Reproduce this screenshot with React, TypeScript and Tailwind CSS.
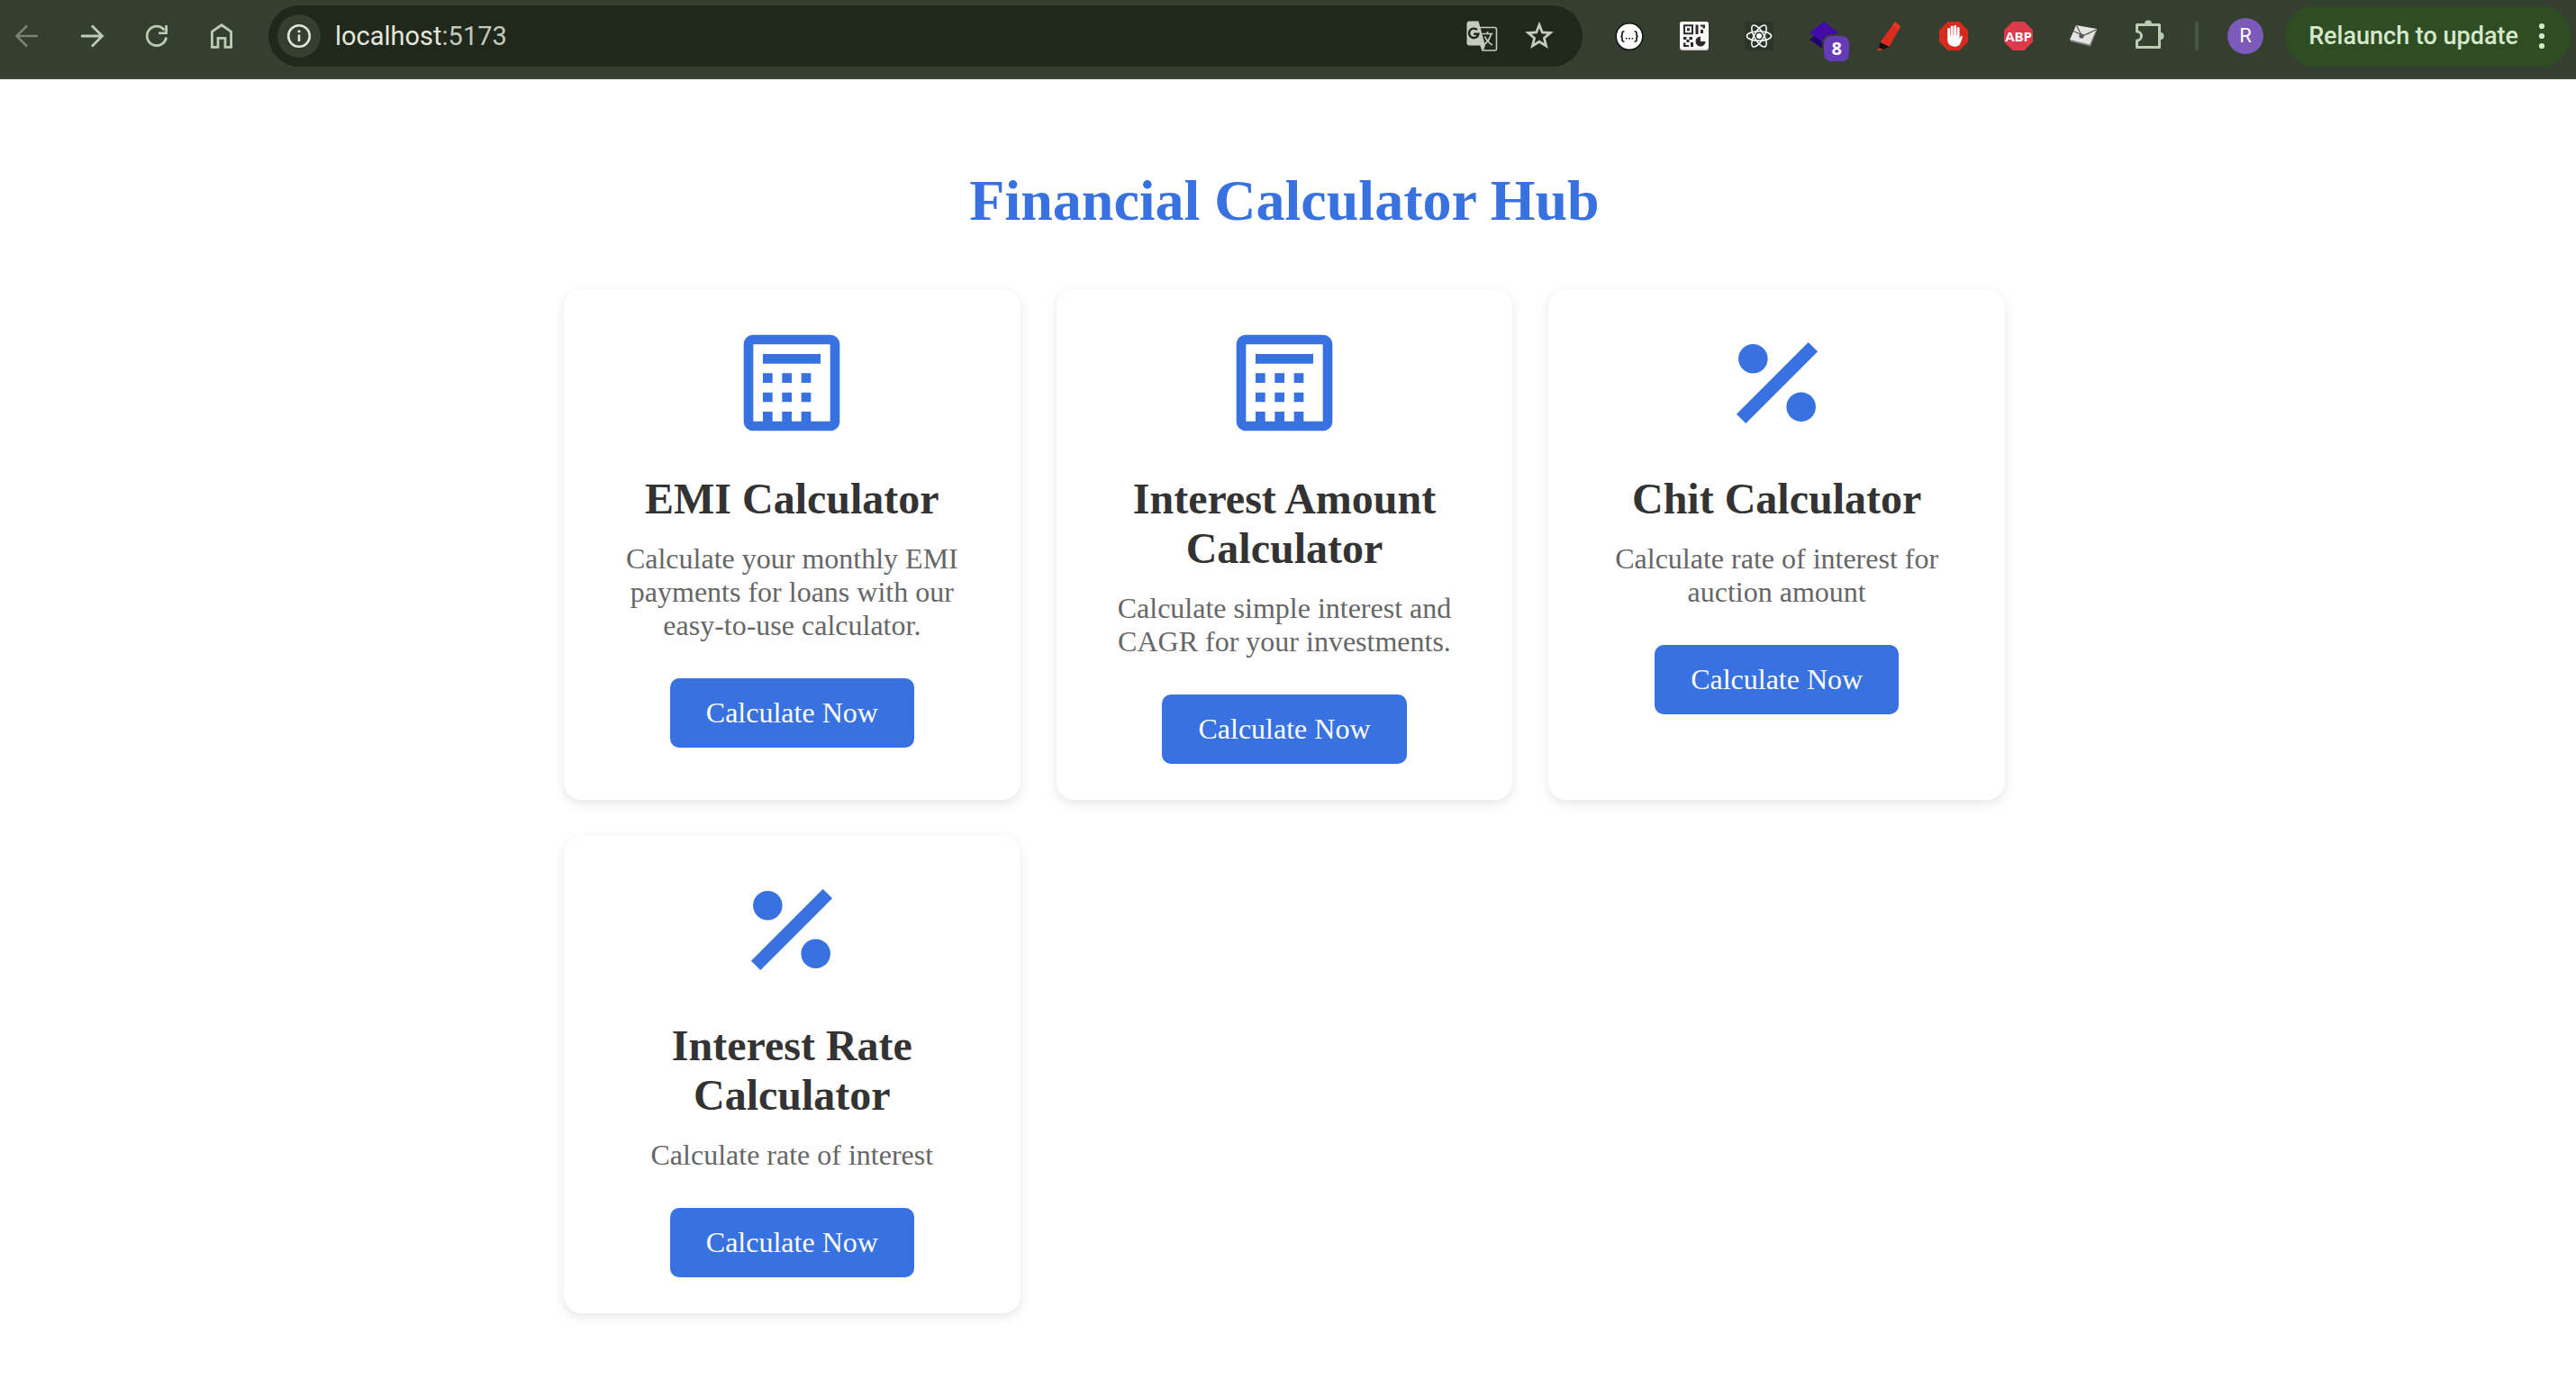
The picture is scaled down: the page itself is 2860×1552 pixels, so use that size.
import React from "react";

const Icon = ({ children }: { children: React.ReactNode }) => (
  <svg width={40} height={40} viewBox="0 0 40 40" fill="none" aria-hidden="true" className="shrink-0">
    {children}
  </svg>
);

const NavButton = ({ label, dim, children }: { label: string; dim?: boolean; children: React.ReactNode }) => (
  <button
    type="button"
    aria-label={label}
    className={
      dim
        ? "flex size-14 items-center justify-center rounded-full text-[#78836f]"
        : "flex size-14 items-center justify-center rounded-full text-[#bccbb1]"
    }
  >
    <Icon>{children}</Icon>
  </button>
);

const ExtButton = ({ label, children }: { label: string; children: React.ReactNode }) => (
  <button type="button" aria-label={label} className="relative flex size-14 items-center justify-center">
    {children}
  </button>
);

const OCTAGON = "13.5,4 26.5,4 36,13.5 36,26.5 26.5,36 13.5,36 4,26.5 4,13.5";

function Toolbar() {
  return (
    <header className="flex h-[88px] items-center border-b-2 border-[#41463d] bg-[#353f2f] pr-[6px] pb-[6px] pl-[2px] font-[Roboto,sans-serif]">
      <nav className="flex items-center gap-4" aria-label="Browser navigation">
        <NavButton label="Back" dim>
          <path d="M32 20H9.5M20 8.5 8.5 20 20 31.5" stroke="currentColor" strokeWidth="2.6" />
        </NavButton>
        <NavButton label="Forward">
          <path d="M8 20H30.5M20 8.5 31.5 20 20 31.5" stroke="currentColor" strokeWidth="2.8" />
        </NavButton>
        <NavButton label="Reload">
          <path d="M30.5 21.5A10.7 10.7 0 1 1 28.5 13.5" stroke="currentColor" strokeWidth="2.8" />
          <path d="M32 8v10H22v-2.6h7.2V8z" fill="currentColor" />
        </NavButton>
        <NavButton label="Home">
          <path
            d="M9.4 15.2 20 7.8 30.6 15.2V32.4H24V22.3H16V32.4H9.4Z"
            stroke="currentColor"
            strokeWidth="2.8"
          />
        </NavButton>
      </nav>

      <div className="ml-6 flex h-[68px] flex-1 items-center rounded-full bg-[#1f281a] pr-5 pl-[10px]">
        <button
          type="button"
          aria-label="View site information"
          className="flex size-12 items-center justify-center rounded-full bg-[#353f2f] text-[#e3e5dc]"
        >
          <Icon>
            <circle cx="20" cy="20" r="11.8" stroke="currentColor" strokeWidth="2.6" />
            <path d="M20 18.5v7.5" stroke="currentColor" strokeWidth="2.6" />
            <circle cx="20" cy="14.8" r="1.6" fill="currentColor" />
          </Icon>
        </button>
        <div className="ml-4 text-[29px] leading-8 whitespace-nowrap text-[#e3e5dc]">
          localhost<span className="text-[#c3c8bc]">:5173</span>
        </div>
        <div className="ml-auto flex items-center gap-2 text-[#c6c9bf]">
          <button type="button" aria-label="Translate this page" className="flex size-14 items-center justify-center">
            <Icon>
              <path d="M18 10.5H34.5a2 2 0 0 1 2 2V34a2 2 0 0 1-2 2H21L19 30" stroke="currentColor" strokeWidth="1.6" />
              <path
                d="M6.5 3.5H16.5L24 30.5 22 36 19 30.5H6.5a3 3 0 0 1-3-3V6.500A3 3 0 0 1 6.5 3.5Z"
                fill="currentColor"
              />
              <path d="M15 13.2A5.2 5.2 0 1 0 16.4 17.8H11.3" stroke="#1f281a" strokeWidth="2.4" />
              <path
                d="M20.5 17.5H32.5M26.5 15V17.5M30.5 17.5Q28.5 25 23.5 29M23.5 20.5Q26 26.5 32 30"
                stroke="currentColor"
                strokeWidth="1.7"
              />
            </Icon>
          </button>
          <button type="button" aria-label="Bookmark this tab" className="flex size-14 items-center justify-center">
            <Icon>
              <path
                d="M20 7.5 23.3 15.9 32.3 16.5 25.4 22.3 27.6 31 20 26.2 12.4 31 14.6 22.3 7.7 16.5 16.7 15.9Z"
                stroke="currentColor"
                strokeWidth="2.8"
              />
            </Icon>
          </button>
        </div>
      </div>

      <div className="ml-6 flex items-center gap-4">
        <ExtButton label="JSON viewer">
          <Icon>
            <circle cx="20" cy="20.5" r="14.8" fill="#fff" stroke="#111" strokeWidth="1.5" />
            <path
              d="M14.5 15h-1q-1.5 0-1.5 1.6v2.2q0 1.7-1.7 1.7 1.7 0 1.7 1.7v2.2q0 1.6 1.5 1.6h1M25.5 15h1q1.5 0 1.5 1.6v2.2q0 1.7 1.7 1.7-1.7 0-1.7 1.7v2.2q0 1.6-1.5 1.6h-1"
              stroke="#111"
              strokeWidth="1.6"
            />
            <path d="M15.8 22h1.6v1.6h-1.6zM19.2 22h1.6v1.6h-1.6zM22.6 22h1.6v1.6h-1.6z" fill="#111" />
          </Icon>
        </ExtButton>
        <ExtButton label="QR code">
          <Icon>
            <rect x="4" y="4" width="32" height="32" rx="3" fill="#cfcfcf" />
            <rect x="4" y="4" width="32" height="30.5" rx="3" fill="#fafafa" />
            <path d="M9 8.2h9v9H9z" stroke="#2b2b2b" strokeWidth="2" />
            <path
              d="M12 11.2h3v3h-3zM21.5 7.5h3v10.5h-3zM27 7.5h5v4h-2.5V9.5H27zM27 13h3v4h-3zM8 21h3.5v3H8zM11.5 24h3v3h-3zM14.5 21h3.5v3h-3.5zM8 27.5h2.5V30H14v2H8zM16 27h3v5h-3z"
              fill="#2b2b2b"
            />
            <path d="M27 20.5v5.5h5.5a5.5 5.5 0 1 1-5.5-5.5z" fill="#2b2b2b" />
          </Icon>
        </ExtButton>
        <ExtButton label="React Developer Tools">
          <Icon>
            <rect x="4" y="4" width="32" height="32" rx="2" fill="#2b3528" />
            <circle cx="20" cy="20" r="3" fill="#fff" />
            <g stroke="#fff" strokeWidth="1.5">
              <ellipse cx="20" cy="20" rx="13.6" ry="5.2" />
              <ellipse cx="20" cy="20" rx="13.6" ry="5.2" transform="rotate(60 20 20)" />
              <ellipse cx="20" cy="20" rx="13.6" ry="5.2" transform="rotate(120 20 20)" />
            </g>
          </Icon>
        </ExtButton>
        <ExtButton label="Layers, 8 items">
          <Icon>
            <path d="M4 24 20 12 36 24 20 35Z" fill="#20046b" />
            <path d="M4 16 20 4 36 16 20 28Z" fill="#440ca6" />
          </Icon>
          <span className="absolute -right-[2px] -bottom-[2px] flex size-8 items-center justify-center rounded-[10px] border-2 border-[#353f2f] bg-[#673ab7] font-['Noto_Sans',sans-serif] text-xl leading-5 font-bold text-white">
            8
          </span>
        </ExtButton>
        <ExtButton label="Highlighter">
          <Icon>
            <path d="M27 4 33 9.5 20.5 32 10.5 27Z" fill="#dd2c1e" />
            <path d="M27 4 33 9.5 31 13 24.5 8Z" fill="#e5372a" />
            <path d="M10.5 27 20.5 32 14.5 34.5 9 33.5Z" fill="#111" />
            <path d="M9 33.5 12.5 34.5 12 36H7Z" fill="#e8321f" />
          </Icon>
        </ExtButton>
        <ExtButton label="AdBlock">
          <Icon>
            <polygon points={OCTAGON} fill="#d52b1e" />
            <path
              d="M13.2 20.5V12.5a1.4 1.4 0 0 1 2.8 0V19h.6V10a1.5 1.5 0 0 1 3 0V18.5h.6V9.3a1.5 1.5 0 0 1 3 0V19h.6V11.5a1.4 1.4 0 0 1 2.8 0V23l1-2.5c.7-1.5 2.8-.8 2.3.8L27.5 28c-1 2.5-3 3.8-6 3.8-5 0-8.3-3-8.3-7.5Z"
              fill="#fff"
            />
          </Icon>
        </ExtButton>
        <ExtButton label="Adblock Plus">
          <Icon>
            <polygon points={OCTAGON} fill="#dc3a4a" />
          </Icon>
          <span className="absolute inset-0 flex items-center justify-center font-['Open_Sans',sans-serif] text-[15px] leading-none font-bold text-white">
            ABP
          </span>
        </ExtButton>
        <ExtButton label="Mail tracker">
          <Icon>
            <path d="M5 24 27 29.5 35 12.5 34.5 15 28 31.5 6 26Z" fill="#858585" />
            <path d="M12 8 35 12 27 29.5 5 24Z" fill="#e4e4e4" />
            <path d="M9 14.5 20 19.5 33 13.5M12.5 8.5 18 19M24 18 34 13" stroke="#555" strokeWidth="1.2" />
            <circle cx="18" cy="20" r="2.6" fill="#555" />
          </Icon>
        </ExtButton>
        <ExtButton label="Extensions">
          <Icon>
            <path
              d="M7.5 7.5H32.5V32.5H7.5V25A5 5 0 0 0 7.5 15Z"
              stroke="#bccbb1"
              strokeWidth="3"
              strokeLinejoin="round"
            />
            <path d="M16 6.5a4 4 0 0 1 8 0zM33.5 16a4 4 0 0 1 0 8z" fill="#bccbb1" />
          </Icon>
        </ExtButton>
      </div>

      <div className="ml-6 h-8 w-1 rounded-full bg-[#4a5644]" />
      <button
        type="button"
        aria-label="Profile"
        className="ml-8 flex size-10 items-center justify-center rounded-full bg-[#7b5abb] text-[22px] leading-none text-white"
      >
        R
      </button>
      <button
        type="button"
        className="ml-6 flex h-[68px] items-center gap-5 rounded-full bg-[#2f4d22] px-[26px] text-[27px] leading-8 font-medium whitespace-nowrap text-[#d6e8cc]"
      >
        Relaunch to update
        <svg width="12" height="32" viewBox="0 0 12 32" fill="currentColor" aria-hidden="true">
          <circle cx="6" cy="5" r="3.1" />
          <circle cx="6" cy="16" r="3.1" />
          <circle cx="6" cy="27" r="3.1" />
        </svg>
      </button>
    </header>
  );
}

const CalculatorIcon = () => (
  <svg className="size-32" viewBox="0 0 24 24" fill="currentColor" aria-hidden="true">
    <path d="M20 2H4a2 2 0 0 0-2 2v16a2 2 0 0 0 2 2h16a2 2 0 0 0 2-2V4a2 2 0 0 0-2-2ZM20 20H16V18H14V20H12V18H10V20H8V18H6V20H4V4H20ZM6 6h12v2H6zM6 10h2v2H6zM10 10h2v2h-2zM14 10h2v2h-2zM6 14h2v2H6zM10 14h2v2h-2zM14 14h2v2h-2z" />
  </svg>
);

const PercentIcon = () => (
  <svg className="size-32" viewBox="0 0 24 24" fill="currentColor" aria-hidden="true">
    <path d="M18.5 3.55 20.45 5.5 5.5 20.45 3.55 18.5Z" />
    <circle cx="7" cy="7" r="3.05" />
    <circle cx="17" cy="17" r="3.05" />
  </svg>
);

const calculators = [
  {
    title: "EMI Calculator",
    text: "Calculate your monthly EMI payments for loans with our easy-to-use calculator.",
    icon: <CalculatorIcon />,
  },
  {
    title: "Interest Amount Calculator",
    text: "Calculate simple interest and CAGR for your investments.",
    icon: <CalculatorIcon />,
  },
  { title: "Chit Calculator", text: "Calculate rate of interest for auction amount", icon: <PercentIcon /> },
  { title: "Interest Rate Calculator", text: "Calculate rate of interest", icon: <PercentIcon /> },
];

export default function App() {
  return (
    <div className="min-h-screen bg-white">
      <Toolbar />
      <main className="pt-[98px] pr-2 pb-20 font-['Liberation_Serif',serif]">
        <h1 className="text-center text-[64px] leading-[74px] font-bold text-[#3871e0]">Financial Calculator Hub</h1>
        <div className="mx-auto mt-[61px] grid max-w-[1600px] grid-cols-3 gap-10">
          {calculators.map((item) => (
            <section
              key={item.title}
              className="flex flex-col items-center rounded-[20px] bg-white p-10 text-center shadow-[0_4px_12px_rgba(0,0,0,0.1)]"
            >
              <div className="text-[#3871e0]">{item.icon}</div>
              <h2 className="mt-[37px] text-5xl leading-[55px] font-bold text-[#333]">{item.title}</h2>
              <p className="mt-[21px] text-[32px] leading-[37px] text-[#666]">{item.text}</p>
              <button
                type="button"
                className="mt-10 rounded-[10px] bg-[#3871e0] px-10 py-5 text-[32px] leading-[37px] text-white"
              >
                Calculate Now
              </button>
            </section>
          ))}
        </div>
      </main>
    </div>
  );
}
